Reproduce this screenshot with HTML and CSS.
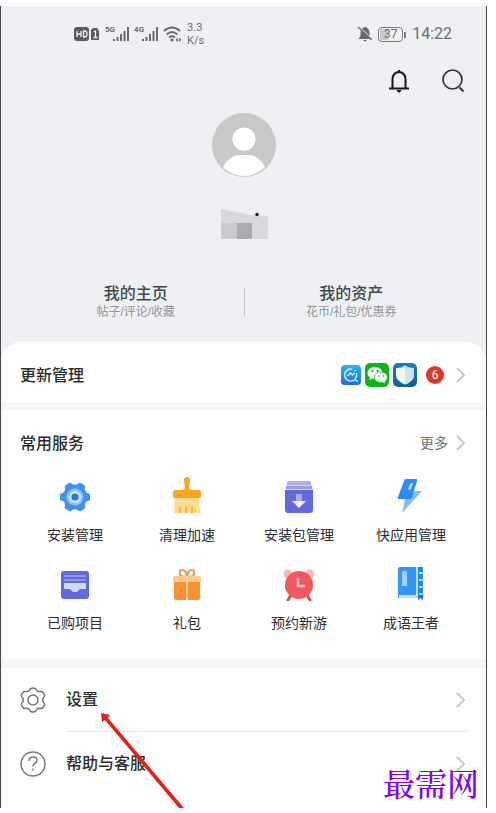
FILE: index.html
```html
<!DOCTYPE html>
<html lang="zh-cn">

<head>
  <meta charset="UTF-8">
  <meta name="viewport" content="width=device-width, initial-scale=1.0">
  <title>我的</title>
  <link rel="stylesheet" href="styles.css">
</head>

<body>
  <main class="phone">
    <header class="profile">
      <!-- 状态栏 -->
      <div class="status-bar">
        <div class="status-left">
          <svg width="26" height="16" viewBox="0 0 26 16">
            <rect x="0" y="1" width="15" height="14" rx="3" fill="#555b5f"/>
            <path d="M3 5v6M3 8h4M7 5v6M9.500 5v6h1q2.500 0 2.500-3t-2.500-3z" fill="none" stroke="#edf1f4" stroke-width="1.300"/>
            <path d="M19 2h4l2 3v9h-8V4z" fill="#555b5f"/>
            <path d="M19.500 6l2-1v6M19.500 11.500h4" fill="none" stroke="#edf1f4" stroke-width="1.300"/>
          </svg>
          <div class="signal">
            <span class="net">5G</span>
            <svg width="16" height="16" viewBox="0 0 16 16" stroke="#666b6f" stroke-width="2">
              <path d="M1 13v2M4.500 11v4M8 8v7M11.500 5v10M15 1v14"/>
            </svg>
          </div>
          <div class="signal">
            <span class="net">4G</span>
            <svg width="16" height="16" viewBox="0 0 16 16" stroke="#666b6f" stroke-width="2">
              <path d="M1 13v2M4.500 11v4M8 8v7M11.500 5v10M15 1v14"/>
            </svg>
          </div>
          <svg width="19" height="16" viewBox="0 0 19 16" fill="none" stroke="#666b6f" stroke-width="1.700">
            <path d="M1 5q8-7 16 0M3.500 8.500q5.500-5 11 0M6 11.500q3-2.500 6 0"/>
            <circle cx="9" cy="14" r=".7"/>
            <path d="M13 14l2-1.500M13 14l2 1M18 14l-2-1.500M18 14l-2 1" stroke-width="1.200"/>
          </svg>
          <div class="speed">3.3<br>K/s</div>
        </div>
        <div class="status-right">
          <svg width="16" height="16" viewBox="0 0 16 16">
            <path d="M8 1q4.500 1 4.500 6v3l2 3h-13l2-3V7q0-5 4.500-6zM6 14h4q-2 2.500-4 0z" fill="#666b6f"/>
            <path d="M1 0l15 14" stroke="#edf1f4" stroke-width="1.300"/>
            <path d="M1 1l14 13" stroke="#666b6f" stroke-width="1.300"/>
          </svg>
          <div class="battery"><span class="battery-level">37</span></div>
          <span class="clock">14:22</span>
        </div>
      </div>

      <div class="toolbar">
        <button class="icon-btn" aria-label="通知">
          <svg width="24" height="26" viewBox="0 0 24 26" fill="none" stroke="#17191b" stroke-width="2">
            <path d="M5.500 20V11a6.500 7 0 0 1 13 0v9M2 20.500h20M12 4V2"/>
            <path d="M10 22.500h4l-2 2z" fill="#17191b" stroke-width="1"/>
          </svg>
        </button>
        <button class="icon-btn" aria-label="搜索">
          <svg width="24" height="26" viewBox="0 0 24 26" fill="none" stroke="#303438" stroke-width="1.700">
            <circle cx="11.500" cy="11.500" r="9.500"/>
            <path d="M18.500 19.500l4 4" stroke-width="2"/>
          </svg>
        </button>
      </div>

      <svg class="avatar" width="64" height="64" viewBox="0 0 64 64">
        <circle cx="32" cy="32" r="32" fill="#c9c9c9"/>
        <circle cx="32" cy="26" r="11.500" fill="#fff"/>
        <path d="M11 54q7-12 16-12h10q9 0 16 12-9 9-21 9t-21-9z" fill="#fff"/>
      </svg>
      <svg class="nickname" width="48" height="32" viewBox="0 0 48 32">
        <path d="M0 1l30 6 17 1v23H0z" fill="#d6dadd"/>
        <path d="M0 15h16v16H0z" fill="#c8ccce"/>
        <path d="M16 15h15v16H16z" fill="#a9adb0"/>
        <circle cx="36" cy="6.500" r="1.700" fill="#111"/>
      </svg>

      <nav class="profile-links">
        <a href="#home" class="profile-link">
          <strong>我的主页</strong>
          <small>帖子/评论/收藏</small>
        </a>
        <a href="#assets" class="profile-link">
          <strong>我的资产</strong>
          <small>花币/礼包/优惠券</small>
        </a>
      </nav>
    </header>

    <!-- 更新管理 -->
    <a href="#update" class="panel update">
      <span class="title">更新管理</span>
      <span class="apps">
        <svg width="20" height="20" viewBox="0 0 20 20">
          <defs>
            <linearGradient id="scan" x2="0" y2="1"><stop stop-color="#22bbf6"/><stop offset="1" stop-color="#2465e3"/></linearGradient>
            <linearGradient id="guard" x2="0" y2="1"><stop stop-color="#1b80bb"/><stop offset="1" stop-color="#0d5f9c"/></linearGradient>
          </defs>
          <rect width="20" height="20" rx="4" fill="url(#scan)"/>
          <path d="M11 4.200a6 6 0 1 0 3 10l2.500 2.500M15.500 8q.8 3-1.500 6" fill="none" stroke="#d8f1ff" stroke-width="1.400"/>
          <path d="M6.500 11l3-3 2 2 2-2" fill="none" stroke="#d8f1ff" stroke-width="1.300"/>
          <circle cx="14" cy="5.500" r=".8" fill="#d8f1ff"/>
        </svg>
        <svg width="24" height="24" viewBox="0 0 24 24">
          <rect width="24" height="24" rx="5" fill="#0db51b"/>
          <path d="M10 4c-4.500 0-7.500 2.600-7.500 6 0 2 1 3.500 2.500 4.500L4.500 17l3-1.500q3 .8 5-.2 6-2 5-6.300C16.500 6 14 4 10 4z" fill="#f5fff3"/>
          <path d="M16 9c-4 0-6.500 2.300-6.500 5.300S12 19.500 16 19.500l2 0 2.500 1.500-.5-2.500c1.500-1 2.300-2.300 2.300-4.200C22.300 11.300 20 9 16 9z" fill="#f5fff3" stroke="#0db51b" stroke-width=".7"/>
          <g fill="#0b9e18"><circle cx="7.500" cy="8" r="1"/><circle cx="12.500" cy="8" r="1"/><circle cx="14" cy="13" r=".8"/><circle cx="18.500" cy="13" r=".8"/></g>
        </svg>
        <svg width="24" height="24" viewBox="0 0 24 24">
          <rect width="24" height="24" rx="5" fill="url(#guard)"/>
          <path d="M12 2.500q4 3 9 2.500v7q0 6-9 9.500-9-3.500-9-9.500V5q5 .5 9-2.500z" fill="#f1f8fc"/>
          <path d="M12 2.500q4 3 9 2.500v7q0 6-9 9.500z" fill="#cfe2ee"/>
        </svg>
      </span>
      <span class="badge">6</span>
      <svg class="chevron" width="10" height="16" viewBox="0 0 10 16"><path d="M1 1l7 7-7 7"/></svg>
    </a>

    <!-- 常用服务 -->
    <section class="panel services">
      <div class="services-head">
        <h2 class="title">常用服务</h2>
        <a href="#more" class="more">更多
          <svg class="chevron" width="10" height="16" viewBox="0 0 10 16"><path d="M1 1l7 7-7 7"/></svg>
        </a>
      </div>
      <div class="service-grid">
        <a href="#install" class="service">
          <svg width="32" height="32" viewBox="0 0 32 32">
            <path d="M10 2q2-1 3 1 3 1.500 6 0 1-2 3-1l3 2q2 1 1 3-.5 3 2 5 3 0 3 2v4q0 2-3 2-2.500 2-2 5 1 2-1 3l-3 2q-2 1-3-1-3-1.500-6 0-1 2-3 1l-3-2q-2-1-1-3 .5-3-2-5-3 0-3-2v-4q0-2 3-2 2.500-2 2-5-1-2 1-3z" fill="#4291ee"/>
            <circle cx="16" cy="16" r="8.500" fill="#8fc4fb"/>
            <circle cx="16" cy="16" r="6" fill="#c9e6ff"/>
            <circle cx="16" cy="16" r="3.500" fill="#2776d8"/>
          </svg>
          安装管理
        </a>
        <a href="#clean" class="service">
          <svg width="32" height="36" viewBox="0 0 32 36">
            <path d="M4 19h24l1 17H3z" fill="#ffdc91"/>
            <path d="M8 36v-4q0-3 2-3v7zM14 36v-5l2-2v7zM20 36v-5l2-2v7z" fill="#f5b432"/>
            <path d="M13 3q0-3 3-3t3 3l-1 7q0 3 3 3h6q3 0 3 3v3q0 2-2 2H4q-2 0-2-2v-3q0-3 3-3h6q3 0 3-3z" fill="#f9a51c"/>
          </svg>
          清理加速
        </a>
        <a href="#packages" class="service">
          <svg width="32" height="32" viewBox="0 0 32 32">
            <path d="M4 1q0-1 2-1h20q2 0 2 1v3H4z" fill="#aaafe7"/>
            <path d="M3 4.500h26V8H3z" fill="#989ee5"/>
            <path d="M2 9h28v20q0 3-3 3H5q-3 0-3-3z" fill="#6269dd"/>
            <path d="M13 13h6v7h-6z" fill="#a8afff"/>
            <path d="M9 20h14l-7 7z" fill="#eef0ff"/>
            <path d="M2 8.500h28" stroke="#d9dcfb"/>
          </svg>
          安装包管理
        </a>
        <a href="#quick" class="service">
          <svg width="32" height="34" viewBox="0 0 32 34">
            <path d="M13 12h14L7 34l3-14z" fill="#81bbfc"/>
            <path d="M9 2q.5-2 2-2h10q2 0 1 2l-5 16q-.5 2-2 2H4q-2 0-1-2z" fill="#2b8af5"/>
            <path d="M15 5q3-2 3 0l-2 5q-2 2-3 0z" fill="#b6dcff"/>
          </svg>
          快应用管理
        </a>
        <a href="#bought" class="service">
          <svg width="32" height="32" viewBox="0 0 32 32">
            <rect x="2" y="2" width="28" height="28" rx="3" fill="#6269dd"/>
            <path d="M5 7h22M5 11h22" stroke="#8d96f0" stroke-width="2"/>
            <path d="M5 14h22v6h-6l-3 3h-4l-3-3H5z" fill="#cbdcfb"/>
          </svg>
          已购项目
        </a>
        <a href="#gifts" class="service">
          <svg width="32" height="32" viewBox="0 0 32 32">
            <path d="M16 8C5 8 8-1 13 1.500q3 2 3 6 0-4 3-6C24-1 27 8 16 8z" fill="none" stroke="#dd9b62" stroke-width="2"/>
            <path d="M3 12h26v17q0 2-2 2H5q-2 0-2-2z" fill="#fa902f"/>
            <rect x="2" y="7" width="28" height="6" rx="1" fill="#fdc98e"/>
            <path d="M16 7v24" stroke="#ffd3a1" stroke-width="2"/>
          </svg>
          礼包
        </a>
        <a href="#booking" class="service">
          <svg width="32" height="32" viewBox="0 0 32 32">
            <circle cx="5" cy="5" r="4.500" fill="#f6b9ba"/>
            <circle cx="27" cy="5" r="4.500" fill="#f6b9ba"/>
            <path d="M8 26l-3 5M24 26l3 5" stroke="#d64b52" stroke-width="3" stroke-linecap="round"/>
            <circle cx="16" cy="16" r="14" fill="#f3575f"/>
            <path d="M15 9v8h7" fill="none" stroke="#ffc1c2" stroke-width="2.500"/>
          </svg>
          预约新游
        </a>
        <a href="#idiom" class="service">
          <svg width="32" height="34" viewBox="0 0 32 34">
            <path d="M5 0h16v31H3V2q0-2 2-2z" fill="#3495f4"/>
            <path d="M4 28h25v3H4z" fill="#bfe0fa"/>
            <path d="M23 0h5v28h-5z" fill="#2584e8"/>
            <path d="M22 0v29" stroke="#9fd2ff" stroke-width="1.500"/>
            <path d="M24 6h5M24 13h5M24 20h5M24 27h5" stroke="#a5dcff" stroke-width="2"/>
            <path d="M7 4h5v15H7z" fill="#9dceff"/>
            <path d="M23 28h5v5l-2.500-2-2.500 2z" fill="#1d72c7"/>
          </svg>
          成语王者
        </a>
      </div>
    </section>

    <!-- 设置 / 帮助 -->
    <section class="panel settings">
      <a href="#settings" class="row">
        <svg width="26" height="26" viewBox="0 0 26 26" fill="none" stroke="#74787a" stroke-width="1.500">
          <path d="M11 1.500q2-1 4 0 1 .5 1.500 2 1.500 1.500 4 1 2-.2 3 1.500l1 2q.5 1.500-1 2.500-1.500 2.500 0 5 1.500 1 1 2.500l-1 2q-1 1.700-3 1.500-2.500-.5-4 1-.5 1.500-1.500 2-2 1-4 0-1-.5-1.500-2-1.500-1.500-4-1-2 .2-3-1.500l-1-2q-.5-1.500 1-2.500 1.500-2.500 0-5Q1 9.500 1.500 8l1-2q1-1.700 3-1.500 2.500.5 4-1 .5-1.500 1.500-2z"/>
          <circle cx="13" cy="13" r="5"/>
        </svg>
        <span class="row-body">设置
          <svg class="chevron" width="10" height="16" viewBox="0 0 10 16"><path d="M1 1l7 7-7 7"/></svg>
        </span>
      </a>
      <a href="#help" class="row">
        <svg width="26" height="26" viewBox="0 0 26 26" fill="none" stroke="#74787a" stroke-width="1.500">
          <circle cx="13" cy="13" r="12"/>
          <path d="M9 10q0-4 4-4t4 3.500c0 3-4 2.500-4 6"/>
          <path d="M13 17.500v2"/>
        </svg>
        <span class="row-body">帮助与客服
          <svg class="chevron" width="10" height="16" viewBox="0 0 10 16"><path d="M1 1l7 7-7 7"/></svg>
        </span>
      </a>
      <svg class="arrow" width="84" height="95" viewBox="0 0 84 95">
        <path d="M0 0l9 2-2 3 76 90h-5L4 7 1 9z" fill="#e5211b"/>
      </svg>
      <span class="watermark">最需网</span>
    </section>
  </main>
</body>

</html>
```

FILE: styles.css
```css
body {
  margin: 0;
  background: #fff;
  font-family: "Liberation Sans", "Noto Sans CJK SC", sans-serif;
  color: #2b2d2f;
}

a {
  color: inherit;
  text-decoration: none;
}

svg {
  display: block;
  flex-shrink: 0;
}

.phone {
  margin: 6px 9px 5px 0;
  border-left: 1px solid #45484a;
  border-right: 1px solid #45484a;
  background: #f6f6f7;
}

/* 顶部个人信息 */
.profile {
  display: flex;
  flex-direction: column;
  align-items: center;
  padding-bottom: 42px;
  margin-bottom: -20px;
  background: #edf1f4;
}

.status-bar {
  display: flex;
  justify-content: space-between;
  align-items: center;
  align-self: stretch;
  height: 56px;
  padding: 0 34px 0 73px;
  color: #6a6e71;
}

.status-left,
.status-right {
  display: flex;
  align-items: center;
  gap: 5px;
}

.signal {
  display: flex;
  align-items: flex-start;
}

.net {
  margin-right: -2px;
  font: bold 8px/8px Roboto, sans-serif;
}

.speed {
  font: 11px/13px Roboto, sans-serif;
}

.battery {
  position: relative;
  padding: 1px;
  border: 1px solid #777b7e;
  border-radius: 4px;
}

.battery::after {
  content: "";
  position: absolute;
  top: 4px;
  right: -4px;
  width: 2px;
  height: 6px;
  background: #777b7e;
}

.battery-level {
  display: block;
  width: 21px;
  border-radius: 2px;
  background: linear-gradient(90deg, #c5c9cb 37%, transparent 37%);
  font: 12px/11px Roboto, sans-serif;
  text-align: center;
}

.clock {
  margin-left: 4px;
  font: 16px/20px Roboto, sans-serif;
}

.toolbar {
  display: flex;
  justify-content: flex-end;
  align-items: center;
  align-self: stretch;
  gap: 30px;
  height: 38px;
  padding-right: 21px;
}

.icon-btn {
  padding: 0;
  border: 0;
  background: none;
  cursor: pointer;
}

.avatar {
  margin-top: 13px;
}

.nickname {
  margin: 31px 0 44px 3px;
}

.profile-links {
  display: flex;
  align-self: stretch;
  padding: 0 27px;
}

.profile-link {
  display: flex;
  flex: 1;
  flex-direction: column;
  align-items: center;
  position: relative;
}

.profile-link + .profile-link::before {
  content: "";
  position: absolute;
  top: 4px;
  bottom: 4px;
  left: 0;
  width: 1px;
  background: #bfc3c6;
}

.profile-link strong {
  color: #45484b;
  font-size: 16px;
  font-weight: 500;
  line-height: 20px;
}

.profile-link small {
  color: #929699;
  font-size: 12px;
  line-height: 16px;
}

/* 白色卡片 */
.panel {
  background: #fff;
}

.title {
  margin: 0;
  padding-top: 2px;
  font-size: 16px;
  font-weight: 500;
  line-height: 22px;
}

.chevron {
  fill: none;
  stroke: #c6c8ca;
  stroke-width: 2;
}

.update {
  display: flex;
  align-items: center;
  position: relative;
  padding: 21px 20px 15px 19px;
  border-radius: 20px 20px 0 0;
}

.apps {
  display: flex;
  align-items: center;
  gap: 4px;
  margin-left: auto;
}

.badge {
  width: 18px;
  margin: 0 12px 0 9px;
  border-radius: 50%;
  background: #dc3a25;
  color: #fff;
  font: 12px/18px Roboto, sans-serif;
  text-align: center;
}

.services {
  margin: 8px 0 9px;
  padding: 21px 19px 26px 18px;
}

.services-head {
  display: flex;
  justify-content: space-between;
  align-items: center;
  padding: 0 1px;
}

.more {
  display: flex;
  align-items: center;
  gap: 8px;
  color: #707376;
  font-size: 14px;
  line-height: 20px;
}

.service-grid {
  display: grid;
  grid-template-columns: repeat(4, 1fr);
  gap: 22px 0;
  margin-top: 22px;
}

.service {
  display: flex;
  flex-direction: column;
  align-items: center;
  justify-content: flex-end;
  gap: 12px;
  font-size: 14px;
  line-height: 20px;
}

/* 设置列表 */
.settings {
  position: relative;
  padding: 0 19px 12px;
}

.row {
  display: flex;
  align-items: center;
  gap: 20px;
}

.row-body {
  display: flex;
  flex: 1;
  justify-content: space-between;
  align-items: center;
  padding: 20px 1px 19px 0;
  border-bottom: 1px solid #e3e4e5;
  font-size: 16px;
  font-weight: 500;
  line-height: 24px;
}

.row + .row .row-body {
  border-color: transparent;
}

.arrow {
  position: absolute;
  bottom: 0;
  left: 100px;
}

.watermark {
  position: absolute;
  right: 7px;
  bottom: 6px;
  color: #8000ff;
  font: 500 32px/40px "Noto Serif CJK SC", "Noto Sans CJK SC", serif;
}
```
